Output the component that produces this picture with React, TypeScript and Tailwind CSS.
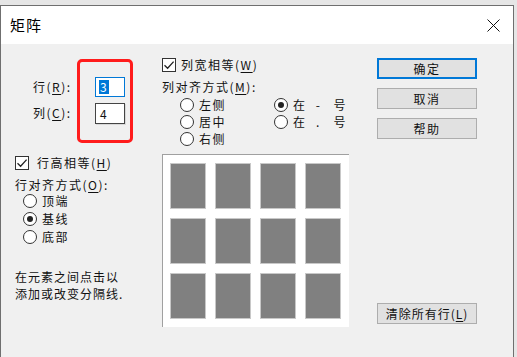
import React from 'react';

const font = { fontFamily: '"Noto Sans CJK SC", "Noto Sans", sans-serif' };

const Key: React.FC<{ k: string }> = ({ k }) => (
  <>
    (<span className="underline underline-offset-2">{k}</span>)
  </>
);

const Check: React.FC = () => (
  <span className="flex h-[14px] w-[14px] items-center justify-center border border-[#333] bg-white">
    <svg width="12" height="12" viewBox="0 0 12 12">
      <path d="M1.5 6.2 L4.6 9.2 L10.6 2.6" fill="none" stroke="#222" strokeWidth="1.3" />
    </svg>
  </span>
);

const Radio: React.FC<{ on?: boolean }> = ({ on }) => (
  <span className="flex h-[14px] w-[14px] items-center justify-center rounded-full border border-[#333] bg-white">
    {on && <span className="h-[6px] w-[6px] rounded-full bg-[#222]" />}
  </span>
);

const RadioRow: React.FC<{ label: React.ReactNode; on?: boolean; h: string }> = ({ label, on, h }) => (
  <div className={`flex items-center gap-[5px] ${h}`}>
    <Radio on={on} />
    <span className="flex items-center leading-none">{label}</span>
  </div>
);

const Sep: React.FC<{ mark: string }> = ({ mark }) => (
  <>
    <span>在</span>
    <span className="ml-[8px] w-[8px] text-center">{mark}</span>
    <span className="ml-[11px]">号</span>
  </>
);

const Btn: React.FC<{ children: React.ReactNode; primary?: boolean; className?: string }> = ({
  children,
  primary,
  className,
}) => (
  <div
    className={`flex h-[21px] w-[100px] items-center justify-center bg-[#e1e1e1] leading-none ${
      primary ? 'border-2 border-[#0078d7]' : 'border border-[#adadad]'
    } ${className ?? ''}`}
  >
    {children}
  </div>
);

export default function App() {
  const cells = Array.from({ length: 12 });
  return (
    <div className="h-[357px] w-[517px] overflow-hidden bg-[#e6e6e6] pt-[5px]" style={font}>
      <div className="h-[360px] w-[514px] border-x border-t border-[#6f6f6f] bg-[#f0f0f0]">
        {/* title bar */}
        <div className="flex h-[38px] items-center justify-between bg-white pl-[9px] pr-[13px]">
          <span className="text-[15px] tracking-[1px] text-black">矩阵</span>
          <svg width="13" height="13" viewBox="0 0 13 13">
            <path d="M0.5 0.5 L12.5 12.5 M12.5 0.5 L0.5 12.5" stroke="#111" strokeWidth="1" />
          </svg>
        </div>

        {/* body */}
        <div className="flex text-[12px] tracking-[1.5px] text-[#111]">
          {/* left column */}
          <div className="flex w-[160px] flex-col pl-[14px] pt-[15px]">
            <div className="flex">
              <div className="ml-[18px] flex w-[44px] flex-col gap-[6px] pt-[18px]">
                <div className="h-[20px] leading-[20px]">
                  行<Key k="R" />:
                </div>
                <div className="h-[20px] leading-[20px]">
                  列<Key k="C" />:
                </div>
              </div>
              <div className="flex h-[84px] w-[56px] flex-col gap-[6px] rounded-[5px] border-[3px] border-[#ff1c1c] pl-[15px] pt-[15px]">
                <div className="flex h-[20px] w-[30px] items-center border border-[#0078d7] bg-white pl-[3px]">
                  <span className="bg-[#0078d7] px-[1px] leading-[14px] text-white">3</span>
                </div>
                <div className="flex h-[21px] w-[30px] items-center border border-[#444] bg-white pl-[4px] shadow-[1px_1px_0_#d8d8d8]">
                  <span className="leading-none">4</span>
                </div>
              </div>
            </div>

            <div className="mt-[12px] flex h-[15px] items-center gap-[8px]">
              <Check />
              <span className="leading-none">
                行高相等<Key k="H" />
              </span>
            </div>
            <div className="mt-[8px] h-[14px] leading-[14px]">
              行对齐方式<Key k="O" />:
            </div>
            <div className="ml-[8px] flex flex-col">
              <RadioRow label="顶端" h="h-[18px]" />
              <RadioRow label="基线" on h="h-[18px]" />
              <RadioRow label="底部" h="h-[18px]" />
            </div>
            <div className="mt-[22px] leading-[17px] tracking-[1px]">
              <div>在元素之间点击以</div>
              <div>添加或改变分隔线.</div>
            </div>
          </div>

          {/* middle column */}
          <div className="flex w-[188px] flex-col pt-[13px]">
            <div className="ml-[1px] flex h-[15px] items-center gap-[5px]">
              <Check />
              <span className="leading-none">
                列宽相等<Key k="W" />
              </span>
            </div>
            <div className="ml-[1px] mt-[8px] h-[14px] leading-[14px]">
              列对齐方式<Key k="M" />:
            </div>
            <div className="mt-[2px] flex">
              <div className="ml-[19px] flex w-[94px] flex-col">
                <RadioRow label="左侧" h="h-[17px]" />
                <RadioRow label="居中" h="h-[17px]" />
                <RadioRow label="右侧" h="h-[17px]" />
              </div>
              <div className="flex flex-col">
                <RadioRow label={<Sep mark="-" />} on h="h-[17px]" />
                <RadioRow label={<Sep mark="." />} h="h-[17px]" />
              </div>
            </div>
            <div className="ml-[1px] mt-[7px] h-[173px] w-[187px] border-l border-t border-[#a0a0a0] bg-white pl-[7px] pt-[8px]">
              <div className="grid grid-cols-[repeat(4,36px)] grid-rows-[repeat(3,46px)] gap-[9px]">
                {cells.map((_, i) => (
                  <div key={i} className="border border-[#c8c8c8] bg-[#808080]" />
                ))}
              </div>
            </div>
          </div>

          {/* right column */}
          <div className="ml-[28px] flex w-[100px] flex-col pt-[14px]">
            <Btn primary>确定</Btn>
            <Btn className="mt-[9px]">取消</Btn>
            <Btn className="mt-[9px]">帮助</Btn>
            <Btn className="mt-[164px] tracking-[1px]">
              清除所有行<Key k="L" />
            </Btn>
          </div>
        </div>
      </div>
    </div>
  );
}
